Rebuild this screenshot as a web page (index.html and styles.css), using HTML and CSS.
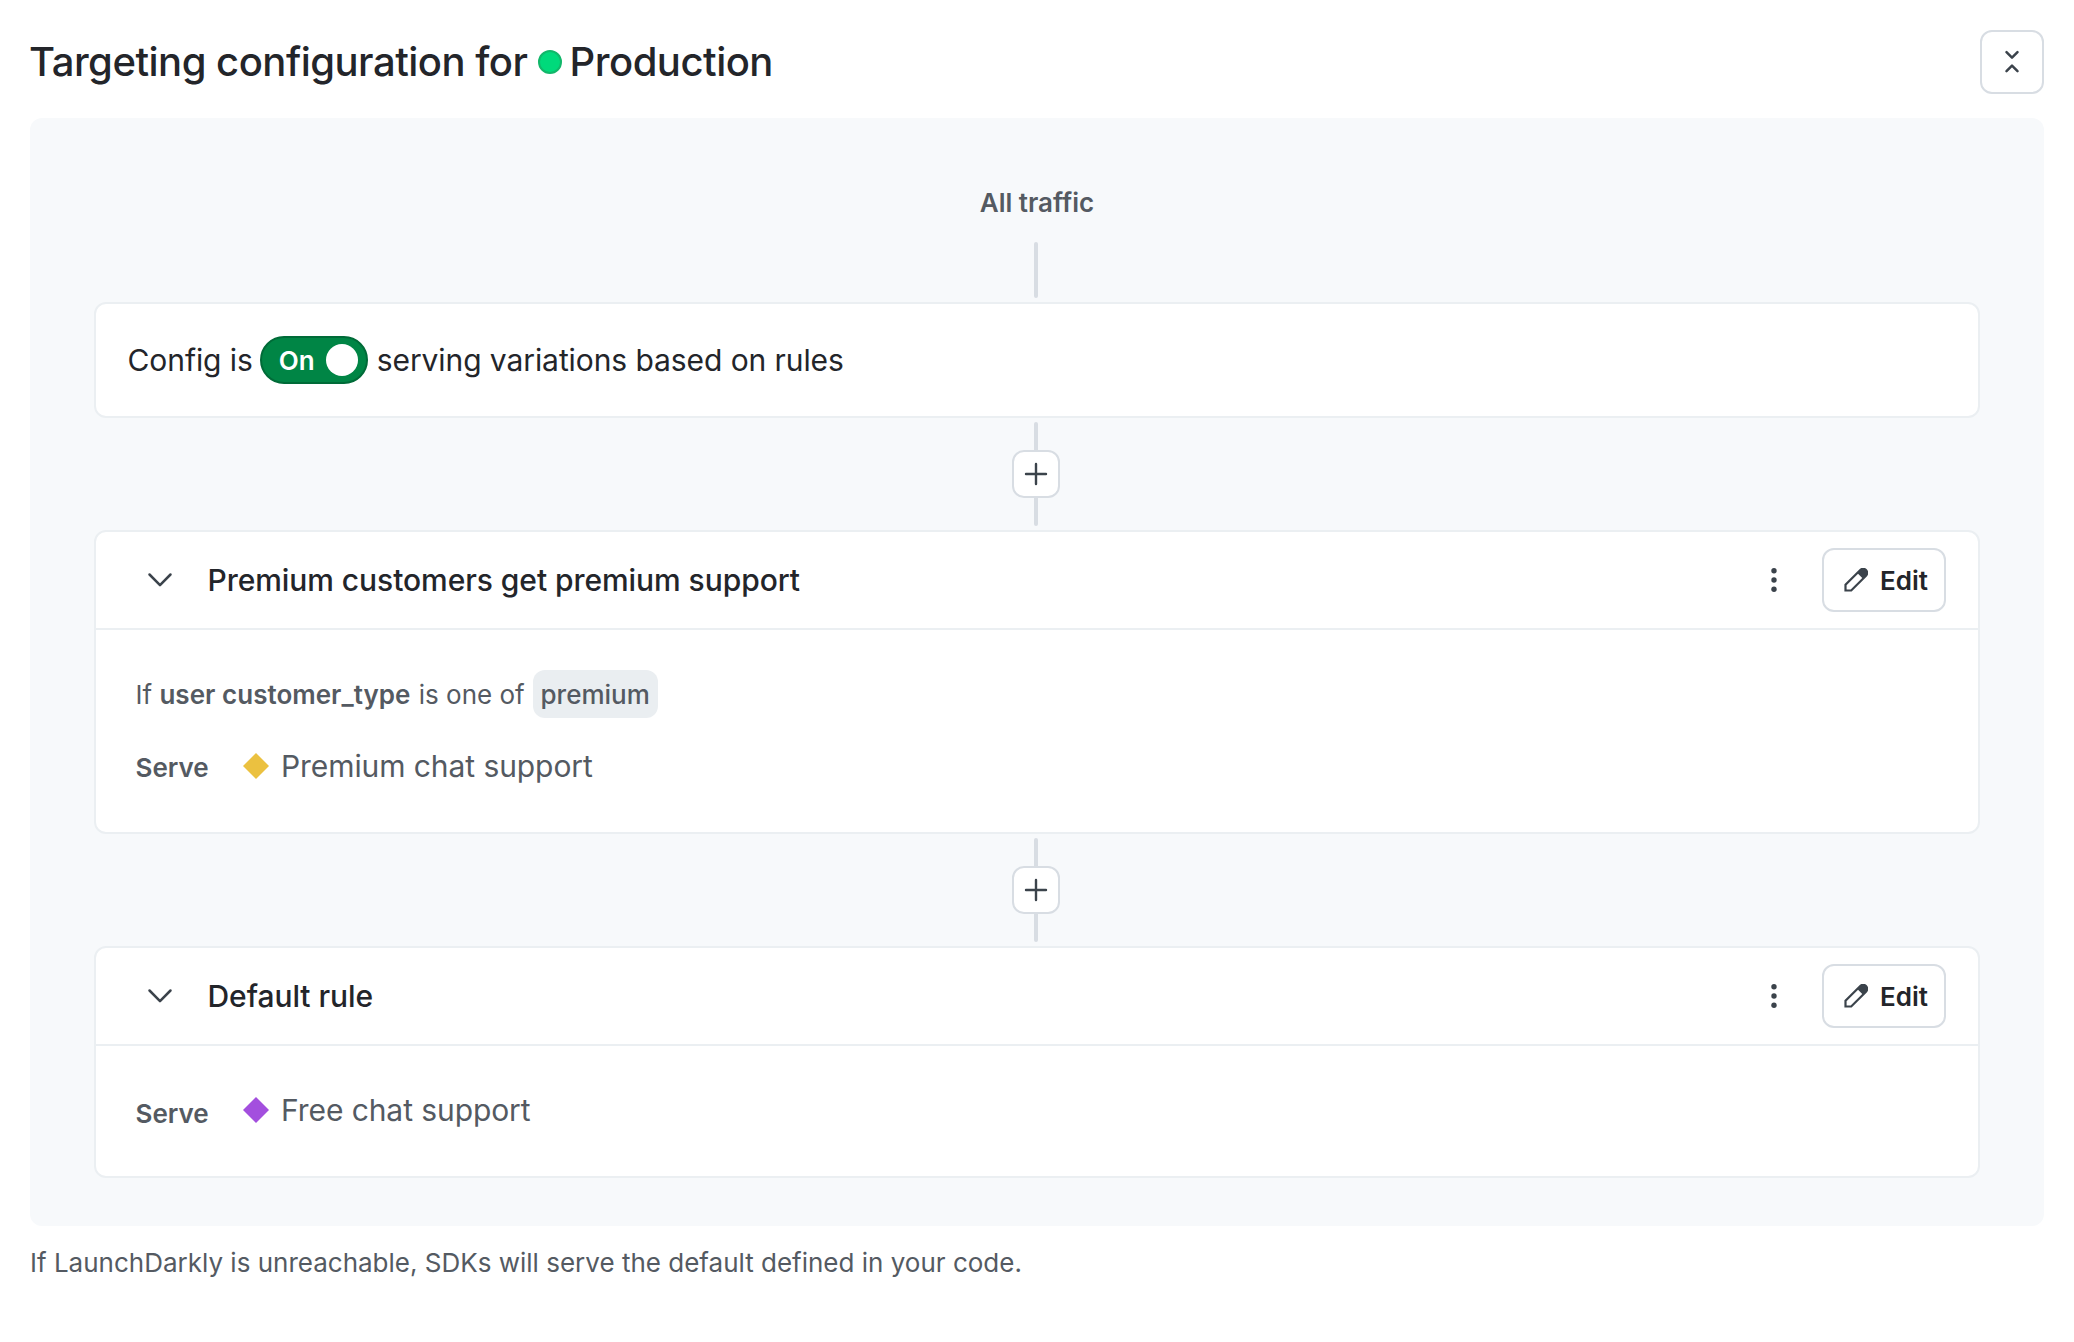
FILE: index.html
```
<!DOCTYPE html>
<html lang="en">
<head>
    <meta charset="UTF-8">
    <meta name="viewport" content="width=device-width, initial-scale=1.0">
    <title>Targeting configuration</title>
    <link rel="stylesheet" href="styles.css">
</head>
<body>
    <header class="page-header">
        <h1>Targeting configuration for <span class="env-dot"></span>Production</h1>
        <button type="button" class="btn btn-icon" aria-label="Collapse all">
            <svg width="32" height="32" viewBox="0 0 32 32" fill="none" stroke="#3b434b" stroke-width="2.5" stroke-linecap="round" stroke-linejoin="round"><path d="M10.5 6.2 16 11.7l5.5-5.5M10.5 25.2 16 19.7l5.5 5.5"/></svg>
        </button>
    </header>

    <main class="targeting">
        <div class="all-traffic">All traffic</div>
        <div class="connector connector-short"></div>

        <section class="card config-card">
            <span>Config is</span>
            <button type="button" class="toggle" role="switch" aria-checked="true">On<span class="knob"></span></button>
            <span>serving variations based on rules</span>
        </section>

        <div class="connector">
            <button type="button" class="add-btn" aria-label="Add rule">
                <svg width="24" height="24" viewBox="0 0 24 24" stroke="#3b434b" stroke-width="2.4" stroke-linecap="round"><path d="M12 2v20M2 12h20"/></svg>
            </button>
        </div>

        <section class="card">
            <div class="card-header">
                <svg class="chevron" width="26" height="16" viewBox="0 0 26 16" fill="none" stroke="#3b434b" stroke-width="2.5" stroke-linecap="round" stroke-linejoin="round"><path d="M2.5 2.5 13 13.2 23.5 2.5"/></svg>
                <h2>Premium customers get premium support</h2>
                <svg class="kebab" width="6" height="26" viewBox="0 0 6 26" fill="#3b434b"><circle cx="3" cy="3.7" r="2.7"/><circle cx="3" cy="13" r="2.7"/><circle cx="3" cy="22.3" r="2.7"/></svg>
                <button type="button" class="btn">
                    <svg width="24" height="24" viewBox="0 0 24 24"><path d="M1.5 22.5v-5.7L16.3 2a3.7 3.7 0 0 1 5.7 5.7L7.2 22.5z" fill="none" stroke="#3b434b" stroke-width="2.2"/><path d="M13.3 5 16.3 2a3.7 3.7 0 0 1 5.7 5.7l-3 3z" fill="#3b434b"/></svg>
                    Edit
                </button>
            </div>
            <div class="card-body">
                <div class="clause">If <b>user customer_type</b> is one of <span class="chip">premium</span></div>
                <div class="serve">
                    <span class="serve-label">Serve</span>
                    <svg width="26" height="26" viewBox="0 0 26 26" fill="#ebc140"><path d="M13 0 26 13 13 26 0 13z"/></svg>
                    <span class="variation">Premium chat support</span>
                </div>
            </div>
        </section>

        <div class="connector">
            <button type="button" class="add-btn" aria-label="Add rule">
                <svg width="24" height="24" viewBox="0 0 24 24" stroke="#3b434b" stroke-width="2.4" stroke-linecap="round"><path d="M12 2v20M2 12h20"/></svg>
            </button>
        </div>

        <section class="card">
            <div class="card-header">
                <svg class="chevron" width="26" height="16" viewBox="0 0 26 16" fill="none" stroke="#3b434b" stroke-width="2.5" stroke-linecap="round" stroke-linejoin="round"><path d="M2.5 2.5 13 13.2 23.5 2.5"/></svg>
                <h2>Default rule</h2>
                <svg class="kebab" width="6" height="26" viewBox="0 0 6 26" fill="#3b434b"><circle cx="3" cy="3.7" r="2.7"/><circle cx="3" cy="13" r="2.7"/><circle cx="3" cy="22.3" r="2.7"/></svg>
                <button type="button" class="btn">
                    <svg width="24" height="24" viewBox="0 0 24 24"><path d="M1.5 22.5v-5.7L16.3 2a3.7 3.7 0 0 1 5.7 5.7L7.2 22.5z" fill="none" stroke="#3b434b" stroke-width="2.2"/><path d="M13.3 5 16.3 2a3.7 3.7 0 0 1 5.7 5.7l-3 3z" fill="#3b434b"/></svg>
                    Edit
                </button>
            </div>
            <div class="card-body card-body-default">
                <div class="serve">
                    <span class="serve-label">Serve</span>
                    <svg width="26" height="26" viewBox="0 0 26 26" fill="#a34fde"><path d="M13 0 26 13 13 26 0 13z"/></svg>
                    <span class="variation">Free chat support</span>
                </div>
            </div>
        </section>
    </main>

    <footer>If LaunchDarkly is unreachable, SDKs will serve the default defined in your code.</footer>
</body>
</html>
```

FILE: styles.css
```
:root {
    --panel-bg: #f7f9fb;
    --card-border: #ebeff2;
    --control-border: #d8dde3;
    --text-primary: #23252a;
    --text-secondary: #545a62;
}

* { box-sizing: border-box; }

body {
    margin: 0;
    padding: 30px 30px 0;
    background: #fff;
    color: var(--text-primary);
    font-family: Inter, "Liberation Sans", sans-serif;
    font-size: 26px;
}

h1, h2 { margin: 0; font-weight: 500; white-space: nowrap; }
button { font: inherit; color: inherit; padding: 0; }
svg { display: block; flex: none; }

.page-header {
    display: flex; align-items: center; justify-content: space-between;
    height: 64px; margin-bottom: 24px;
}
h1 {
    display: flex; align-items: center; margin-left: -1px;
    font-size: 40px; line-height: 48px; letter-spacing: -0.5px; white-space: pre;
}
.env-dot {
    width: 24px; height: 24px; margin-right: 8px;
    border-radius: 50%; background: #00da7b; border: 2px solid #12b76a;
}

.btn {
    display: flex; align-items: center; gap: 12px;
    width: 124px; height: 64px; padding-left: 20px;
    background: #fff; border: 2px solid var(--control-border); border-radius: 12px;
    font-weight: 600;
}
.btn-icon { width: 64px; padding: 0; justify-content: center; }

.targeting {
    display: flex; flex-direction: column; align-items: stretch;
    height: 1108px; padding: 68px 64px 0;
    background: var(--panel-bg); border-radius: 12px;
}
.all-traffic {
    height: 56px; line-height: 34px; text-align: center;
    color: var(--text-secondary); font-weight: 600;
}

/* vertical line between the cards */
.connector {
    display: flex; align-items: center; justify-content: center;
    align-self: center; position: relative; left: -1px;
    width: 4px; height: 104px; margin: 4px 0;
    background: var(--control-border); border-radius: 2px;
}
.connector-short { height: 56px; margin-top: 0; }
.add-btn {
    display: flex; align-items: center; justify-content: center; flex: none;
    width: 48px; height: 48px;
    background: #fff; border: 2px solid var(--control-border); border-radius: 12px;
}

.card { background: #fff; border: 2px solid var(--card-border); border-radius: 12px; flex: none; }
.config-card {
    display: flex; align-items: center;
    height: 116px; padding-left: 31.5px; font-size: 30px; letter-spacing: -0.08px;
}
.toggle {
    display: flex; align-items: center; justify-content: space-between;
    width: 108px; height: 48px; margin: 0 9px 0 7px; padding: 0 8px 0 17px;
    background: #008545; border: 2px solid #006b38; border-radius: 24px;
    color: #fff; font-size: 26px; font-weight: 600;
}
.knob { width: 32px; height: 32px; border-radius: 50%; background: #fff; }

.card-header {
    display: flex; align-items: center;
    height: 98px; padding: 0 32px 0 51px;
    border-bottom: 2px solid var(--card-border);
}
.chevron { margin-right: 34.5px; }
h2 { flex: 1; font-size: 30px; letter-spacing: -0.06px; }
.kebab { margin-right: 45px; }

.card-body {
    display: flex; flex-direction: column; gap: 28px;
    height: 202px; padding: 40px 40px 0 39.5px; color: var(--text-secondary);
}
.clause { display: flex; align-items: center; height: 48px; white-space: pre; }
.clause b { margin-right: 1px; font-weight: 600; letter-spacing: 0.03px; }
.chip {
    height: 48px; line-height: 49px; margin-left: 0.5px; padding: 0 8px;
    background: #eaeef1; border-radius: 12px; font-weight: 500;
}
.serve { display: flex; align-items: center; height: 40px; }
.serve-label { width: 107.5px; font-weight: 600; padding-top: 2px; }
.variation { margin-left: 12px; font-size: 30px; letter-spacing: -0.08px; }
.card-body-default { height: 130px; padding-top: 44px; }
.card-body-default .serve-label { padding-top: 6px; }

footer { margin-top: 19px; line-height: 36px; color: var(--text-secondary); }
```
